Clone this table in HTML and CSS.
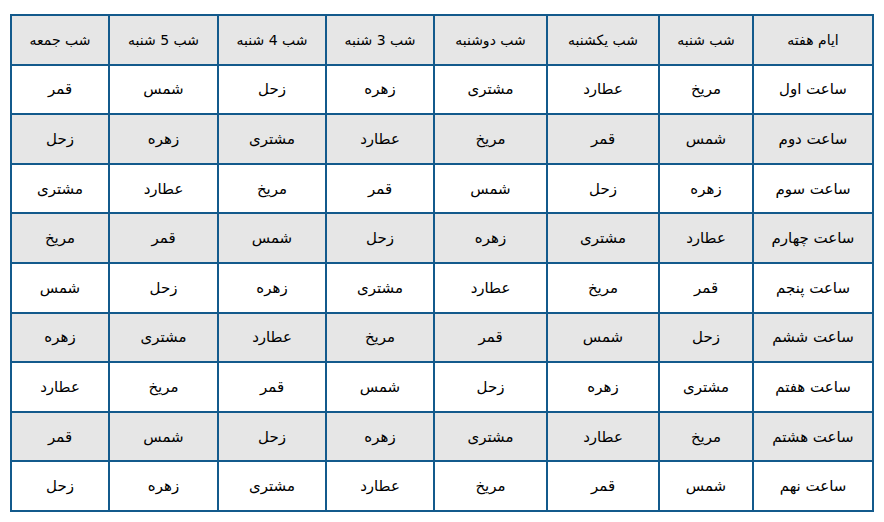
FILE: index.html
```html
<!DOCTYPE html>
<html lang="fa" dir="rtl">
<head>
<meta charset="utf-8">
<link rel="stylesheet" href="styles.css">
</head>
<body>
<div class="wrap">
<table class="hours">
<colgroup>
<col class="c1"><col class="c2"><col class="c3"><col class="c4"><col class="c5"><col class="c6"><col class="c7"><col class="c8">
</colgroup>
<thead>
<tr><th>ایام هفته</th><th>شب شنبه</th><th>شب یکشنبه</th><th>شب دوشنبه</th><th>شب 3 شنبه</th><th>شب 4 شنبه</th><th>شب 5 شنبه</th><th>شب جمعه</th></tr>
</thead>
<tbody>
<tr><td>ساعت اول</td><td>مریخ</td><td>عطارد</td><td>مشتری</td><td>زهره</td><td>زحل</td><td>شمس</td><td>قمر</td></tr>
<tr class="alt"><td>ساعت دوم</td><td>شمس</td><td>قمر</td><td>مریخ</td><td>عطارد</td><td>مشتری</td><td>زهره</td><td>زحل</td></tr>
<tr><td>ساعت سوم</td><td>زهره</td><td>زحل</td><td>شمس</td><td>قمر</td><td>مریخ</td><td>عطارد</td><td>مشتری</td></tr>
<tr class="alt"><td>ساعت چهارم</td><td>عطارد</td><td>مشتری</td><td>زهره</td><td>زحل</td><td>شمس</td><td>قمر</td><td>مریخ</td></tr>
<tr><td>ساعت پنجم</td><td>قمر</td><td>مریخ</td><td>عطارد</td><td>مشتری</td><td>زهره</td><td>زحل</td><td>شمس</td></tr>
<tr class="alt"><td>ساعت ششم</td><td>زحل</td><td>شمس</td><td>قمر</td><td>مریخ</td><td>عطارد</td><td>مشتری</td><td>زهره</td></tr>
<tr><td>ساعت هفتم</td><td>مشتری</td><td>زهره</td><td>زحل</td><td>شمس</td><td>قمر</td><td>مریخ</td><td>عطارد</td></tr>
<tr class="alt"><td>ساعت هشتم</td><td>مریخ</td><td>عطارد</td><td>مشتری</td><td>زهره</td><td>زحل</td><td>شمس</td><td>قمر</td></tr>
<tr><td>ساعت نهم</td><td>شمس</td><td>قمر</td><td>مریخ</td><td>عطارد</td><td>مشتری</td><td>زهره</td><td>زحل</td></tr>
</tbody>
</table>
</div>
</body>
</html>
```
FILE: styles.css
```css
html, body {
  margin: 0;
  padding: 0;
  background: #ffffff;
}
.wrap {
  padding: 14px 10px 0 11px;
  direction: rtl;
}
.hours {
  border-collapse: collapse;
  table-layout: fixed;
  width: 863px;
  font-family: "DejaVu Sans", Tahoma, sans-serif;
  color: #000;
  border: 2px solid #135a8c;
}
.hours th, .hours td {
  border: 2px solid #135a8c;
  text-align: center;
  vertical-align: middle;
  padding: 0;
  height: 47.6px;
  font-weight: normal;
}
.hours th {
  font-size: 14px;
  background: #e6e6e6;
}
.hours td {
  font-size: 15px;
}
.hours tr.alt td {
  background: #e6e6e6;
}
.c1 { width: 120px; }
.c2 { width: 94px; }
.c3 { width: 112px; }
.c4 { width: 113px; }
.c5 { width: 108px; }
.c6 { width: 108px; }
.c7 { width: 109px; }
.c8 { width: 98px; }
```
